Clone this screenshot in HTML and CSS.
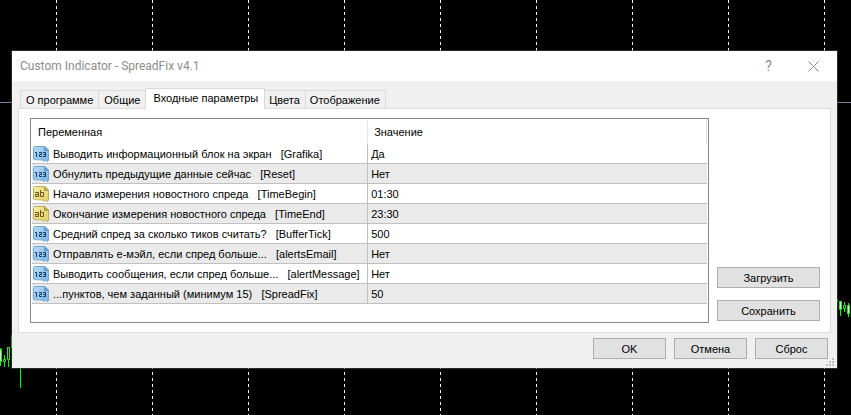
FILE: index.html
```html
<!DOCTYPE html>
<html lang="ru">
<head>
  <meta charset="UTF-8">
  <meta name="viewport" content="width=device-width, initial-scale=1.0">
  <title>Custom Indicator - SpreadFix v4.1</title>
  <link rel="stylesheet" href="styles.css">
</head>
<body>
  <!-- icon shapes used by the parameter rows -->
  <svg class="defs" width="0" height="0" aria-hidden="true">
    <defs>
      <linearGradient id="blue" x1="0" y1="0" x2="1" y2="1">
        <stop offset="0" stop-color="#b9dcf8"/>
        <stop offset="1" stop-color="#7ab4e4"/>
      </linearGradient>
      <linearGradient id="gold" x1="0" y1="0" x2="1" y2="1">
        <stop offset="0" stop-color="#f6efa6"/>
        <stop offset="1" stop-color="#dfce66"/>
      </linearGradient>
      <symbol id="icon-num" viewBox="0 0 16 16">
        <path d="M1.500 .5H12L15.500 4V14.500L14 15.500L12.500 14L11 15.500L9.500 13.500L8 14.500L6.500 13L5 14.500L3.500 13L2 14L.5 13V1.500Z" fill="url(#blue)" stroke="#6ea6d6"/>
        <path d="M11.500 1V4.500H15Z" fill="#5f9dd2" stroke="#5f9dd2"/>
        <path d="M2 6.500H3.500V11M6 6.500H8.500V8.500H6.500V10.500H9M10 6.500H12.500V10.500H10M10.500 8.500H12.500" fill="none" stroke="#0f3c66"/>
      </symbol>
      <symbol id="icon-str" viewBox="0 0 16 16">
        <path d="M1.500 .5H12L15.500 4V14.500L14 15.500L12.500 14L11 15.500L9.500 13.500L8 14.500L6.500 13L5 14.500L3.500 13L2 14L.5 13V1.500Z" fill="url(#gold)" stroke="#bcab58"/>
        <path d="M11.500 1V4.500H15Z" fill="#b5a24a" stroke="#b5a24a"/>
        <path d="M2 6.500H5.500V10.500H2.500V8.500H5.500M7.500 4V10.500H10.500V6.500H7.500" fill="none" stroke="#6b5a10"/>
      </symbol>
    </defs>
  </svg>

  <main class="chart">
    <svg class="candles candles-left" width="22" height="55" viewBox="0 0 22 55" aria-hidden="true">
      <path d="M.5 14V32M4.500 21V33M8.500 13V33M11.500 1V14M20.500 34V54" stroke="#00ff00" fill="none"/>
      <path d="M-1 15.500H1.500V27.500H-1Z" fill="#fff" stroke="#00ff00"/>
      <path d="M3.500 25.500H5.500V27.500H3.500ZM7.500 13.500H9.500V25.500H7.500Z" fill="#000" stroke="#00ff00"/>
    </svg>
    <svg class="candles candles-right" width="14" height="20" viewBox="0 0 14 20" aria-hidden="true">
      <path d="M.5 0V3M3.500 2V17M7.500 3V13M11.500 4V18" stroke="#00ff00" fill="none"/>
      <path d="M2.500 2.500H4.500V10.500H2.500ZM10.500 6.500H12.500V14.500H10.500Z" fill="#fff" stroke="#00ff00"/>
      <path d="M6.500 6.500H8.500V9.500H6.500Z" fill="#000" stroke="#00ff00"/>
    </svg>

    <section class="dialog" role="dialog" aria-labelledby="title">
      <header class="titlebar">
        <h1 id="title">Custom Indicator - SpreadFix v4.1</h1>
        <button class="caption-btn help" type="button">?</button>
        <button class="caption-btn" type="button" aria-label="Закрыть">
          <svg width="11" height="11" viewBox="0 0 11 11"><path d="M.5 .5L10.500 10.500M10.500 .5L.5 10.500" stroke="#8c8c8c" fill="none"/></svg>
        </button>
      </header>

      <div class="content">
        <div class="tabs" role="tablist">
          <button class="tab" type="button" role="tab">О программе</button>
          <button class="tab" type="button" role="tab">Общие</button>
          <button class="tab active" type="button" role="tab" aria-selected="true">Входные параметры</button>
          <button class="tab" type="button" role="tab">Цвета</button>
          <button class="tab" type="button" role="tab">Отображение</button>
        </div>

        <div class="panel" role="tabpanel">
          <div class="list">
            <table class="params">
              <thead>
                <tr><th class="name">Переменная</th><th>Значение</th></tr>
              </thead>
              <tbody>
                <tr><td><svg class="icon"><use href="#icon-num"/></svg>Выводить информационный блок на экран   [Grafika]</td><td>Да</td></tr>
                <tr><td><svg class="icon"><use href="#icon-num"/></svg>Обнулить предыдущие данные сейчас   [Reset]</td><td>Нет</td></tr>
                <tr><td><svg class="icon"><use href="#icon-str"/></svg>Начало измерения новостного спреда   [TimeBegin]</td><td>01:30</td></tr>
                <tr><td><svg class="icon"><use href="#icon-str"/></svg>Окончание измерения новостного спреда   [TimeEnd]</td><td>23:30</td></tr>
                <tr><td><svg class="icon"><use href="#icon-num"/></svg>Средний спред за сколько тиков считать?   [BufferTick]</td><td>500</td></tr>
                <tr><td><svg class="icon"><use href="#icon-num"/></svg>Отправлять е-мэйл, если спред больше...   [alertsEmail]</td><td>Нет</td></tr>
                <tr><td><svg class="icon"><use href="#icon-num"/></svg>Выводить сообщения, если спред больше...   [alertMessage]</td><td>Нет</td></tr>
                <tr><td><svg class="icon"><use href="#icon-num"/></svg>...пунктов, чем заданный (минимум 15)   [SpreadFix]</td><td>50</td></tr>
              </tbody>
            </table>
          </div>
          <div class="side">
            <button class="btn" type="button">Загрузить</button>
            <button class="btn" type="button">Сохранить</button>
          </div>
        </div>
      </div>

      <footer class="actions">
        <button class="btn" type="button">OK</button>
        <button class="btn" type="button">Отмена</button>
        <button class="btn" type="button">Сброс</button>
        <svg class="grip" width="8" height="8" viewBox="0 0 8 8" aria-hidden="true">
          <path d="M6 0h2v2h-2zM3 3h2v2h-2zM6 3h2v2h-2zM0 6h2v2h-2zM3 6h2v2h-2zM6 6h2v2h-2z" fill="#bfbfbf"/>
        </svg>
      </footer>
    </section>
  </main>
</body>
</html>
```
FILE: styles.css
```css
* {
  box-sizing: border-box;
}
body {
  margin: 0;
  background: #000;
  color: #000;
  font-family: "Liberation Sans", Arial, sans-serif;
  font-size: 11px;
  line-height: 14px;
}
button {
  font: inherit;
  color: inherit;
  padding: 0;
}
.defs {
  position: absolute;
}

/* chart behind the dialog: dashed period separators and the price line */
.chart {
  position: relative;
  min-height: 100vh;
  padding: 50px 13px 46px 11px;
  background:
    linear-gradient(#77839c, #77839c) 0 102px / 100% 1px no-repeat,
    repeating-linear-gradient(transparent 0 3px, #000 3px 6px),
    repeating-linear-gradient(90deg, transparent 0 56px, #fff 56px 57px, transparent 57px 96px),
    #000;
}
.candles {
  position: absolute;
}
.candles-left {
  left: 0;
  top: 334px;
}
.candles-right {
  right: 0;
  top: 299px;
}

.dialog {
  position: relative;
  border: 1px solid rgba(70, 70, 70, 0.6);
  background: #f0f0f0;
  background-clip: padding-box;
}
.titlebar {
  display: flex;
  align-items: center;
  height: 30px;
  padding: 0 1px 0 8px;
  background: #fff;
  color: #8c8c8c;
  font-family: Roboto, "Noto Sans", sans-serif;
  font-size: 12px;
}
.titlebar h1 {
  flex: 1;
  margin: 0;
  font-size: 12px;
  font-weight: normal;
}
.caption-btn {
  display: flex;
  align-items: center;
  justify-content: center;
  width: 45px;
  height: 28px;
  border: 0;
  background: none;
}
.help {
  font-size: 14px;
}

.content {
  padding: 7px 6px 0;
}
.tabs {
  display: flex;
  align-items: flex-end;
  padding-left: 2px;
}
.tab {
  height: 18px;
  padding: 0 5px;
  border: 1px solid #d9d9d9;
  border-width: 1px 1px 0 0;
  background: #f0f0f0;
  white-space: nowrap;
}
.tab:first-child {
  border-left-width: 1px;
}
.tab.active {
  z-index: 1;
  height: 21px;
  margin: 0 0 -1px -1px;
  padding: 0 6px 3px 7px;
  border-left-width: 1px;
  background: #fff;
}
.tab.active ~ .tab {
  padding: 0 5px 0 4px;
}
.panel {
  display: flex;
  gap: 8px;
  padding: 9px 10px 9px 11px;
  border: 1px solid #dcdcdc;
  background: #fff;
}
.list {
  flex: 1;
  min-height: 205px;
  padding: 1px;
  border: 1px solid #828790;
}
.params {
  width: 100%;
  border-collapse: separate;
  border-spacing: 0;
  table-layout: fixed;
}
.params th {
  height: 24px;
  padding: 0 6px;
  border-right: 1px solid #e5e5e5;
  font-weight: normal;
  text-align: left;
}
.params .name {
  width: 49.8%;
}
.params td {
  height: 20px;
  padding: 0 3px;
  border-bottom: 1px solid #c0c0c0;
  white-space: pre;
}
.params td:first-child {
  padding-left: 1px;
  border-right: 1px solid #c0c0c0;
}
.params tbody tr:nth-child(even) {
  background: #eaeaea;
}
.icon {
  width: 16px;
  height: 16px;
  margin-right: 4px;
  vertical-align: -4px;
}

.side {
  display: flex;
  flex-direction: column;
  justify-content: flex-end;
  gap: 12px;
  width: 103px;
  padding-bottom: 2px;
}
.btn {
  height: 21px;
  border: 1px solid #adadad;
  background: #e1e1e1;
}
.actions {
  display: flex;
  justify-content: flex-end;
  gap: 8px;
  padding: 5px 9px 9px;
}
.actions .btn {
  width: 73px;
}
.grip {
  position: absolute;
  right: 3px;
  bottom: 2px;
}
```
